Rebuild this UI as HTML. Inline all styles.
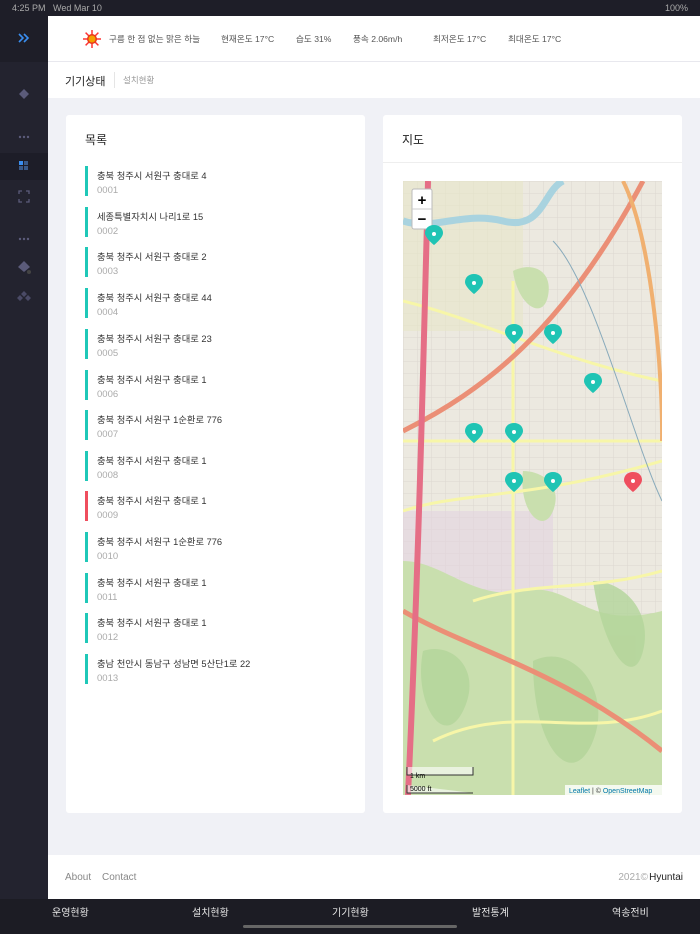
<!DOCTYPE html>
<html><head><meta charset="utf-8"><style>
*{margin:0;padding:0;box-sizing:border-box}
body{width:700px;height:934px;overflow:hidden;background:#f0f1f6;font-family:"Liberation Sans","Noto Sans CJK KR",sans-serif;position:relative}
.abs{position:absolute}
.sb{left:0;top:0;width:48px;height:934px;background:#23232f}
.status{left:0;top:0;width:700px;height:16px;background:#1e1e28;color:#aaa;font-size:9px;line-height:16px;padding-left:12px}
.hdr{left:48px;top:16px;width:652px;height:46px;background:#fff;border-bottom:1px solid #e8e8ee;font-size:8.6px;color:#555}
.hdr span{position:absolute;top:17px}
.tabs{left:48px;top:62px;width:652px;height:36px;background:#fff}
.card{background:#fff;border-radius:3px}
.it{position:absolute;left:85px;width:270px;height:30px}
.it i{position:absolute;left:0;top:0;width:3px;height:30px;background:#1fc8b8}
.it b{position:absolute;left:12px;top:2px;font-weight:normal;font-size:9.3px;color:#333}
.it s{position:absolute;left:12px;top:19px;text-decoration:none;font-size:9.5px;color:#aaa}
.foot{left:48px;top:855px;width:652px;height:44px;background:#fff;font-size:10px;color:#888}
.bt{left:0;top:899px;width:700px;height:35px;background:#1c1c24;color:#e6e6e6;font-size:10px}
.bt span{position:absolute;top:5px}
</style></head><body>
<div class="abs sb"></div>
<div class="abs status">4:25 PM &nbsp; Wed Mar 10<span style="position:absolute;right:12px">100%</span></div>
<div class="abs" style="left:0;top:16px;width:48px;height:46px;background:#1e1e28"></div>
<svg class="abs" style="left:0;top:0" width="48" height="934">
<path d="M19 34l4 4-4 4M24 34l4 4-4 4" stroke="#3a8ef0" stroke-width="1.6" fill="none"/>
<path d="M24 89l5 5-5 5-5-5z" fill="#5b5b7a"/>
<circle cx="20" cy="137" r="1.2" fill="#5b5b7a"/><circle cx="24" cy="137" r="1.2" fill="#5b5b7a"/><circle cx="28" cy="137" r="1.2" fill="#5b5b7a"/>
<rect x="0" y="153" width="48" height="27" fill="#1d1d28"/>
<rect x="19" y="161" width="4" height="4" fill="#3a8ef0"/><rect x="24" y="161" width="4" height="4" fill="#3a5a8a"/><rect x="19" y="166" width="4" height="4" fill="#3a5a8a"/><rect x="24" y="166" width="4" height="4" fill="#3a5a8a"/>
<path d="M19 194v-3h3M26 191h3v3M29 199v3h-3M22 202h-3v-3" stroke="#5b5b7a" fill="none" stroke-width="1.3"/>
<circle cx="20" cy="239" r="1.2" fill="#5b5b7a"/><circle cx="24" cy="239" r="1.2" fill="#5b5b7a"/><circle cx="28" cy="239" r="1.2" fill="#5b5b7a"/>
<path d="M24 261l6 6-6 5-6-5z" fill="#5b5b7a"/><circle cx="29" cy="272" r="2" fill="#444"/>
<path d="M24 291l3 3-3 3-3-3zM20 295l3 3-3 3-3-3zM28 295l3 3-3 3-3-3z" fill="#4a4a66"/>
</svg>
<div class="abs hdr">
<svg style="position:absolute;left:35px;top:14px" width="18" height="18"><g stroke="#f33" stroke-width="1.5"><path d="M9 0v18M0 9h18M2.6 2.6l12.8 12.8M15.4 2.6L2.6 15.4"/></g><circle cx="9" cy="9" r="5" fill="#e8381a"/><circle cx="9" cy="9" r="3.5" fill="#f5a000"/></svg>
<span style="left:61px">구름 한 점 없는 맑은 하늘</span><span style="left:173px">현재온도 17°C</span><span style="left:248px">습도 31%</span><span style="left:305px">풍속 2.06m/h</span><span style="left:385px">최저온도 17°C</span><span style="left:460px">최대온도 17°C</span>
</div>
<div class="abs tabs"><span style="position:absolute;left:17px;top:11px;font-size:11px;color:#222">기기상태</span><div style="position:absolute;left:66px;top:10px;width:1px;height:16px;background:#e5e5e5"></div><span style="position:absolute;left:75px;top:12px;font-size:8.5px;color:#999">설치현황</span></div>
<div class="abs card" style="left:66px;top:115px;width:299px;height:698px">
<div style="position:absolute;left:19px;top:16px;font-size:12px;color:#222">목록</div></div>
<div class="it" style="top:166px"><i></i><b>충북 청주시 서원구 충대로 4</b><s>0001</s></div>
<div class="it" style="top:207px"><i></i><b>세종특별자치시 나리1로 15</b><s>0002</s></div>
<div class="it" style="top:247px"><i></i><b>충북 청주시 서원구 충대로 2</b><s>0003</s></div>
<div class="it" style="top:288px"><i></i><b>충북 청주시 서원구 충대로 44</b><s>0004</s></div>
<div class="it" style="top:329px"><i></i><b>충북 청주시 서원구 충대로 23</b><s>0005</s></div>
<div class="it" style="top:370px"><i></i><b>충북 청주시 서원구 충대로 1</b><s>0006</s></div>
<div class="it" style="top:410px"><i></i><b>충북 청주시 서원구 1순환로 776</b><s>0007</s></div>
<div class="it" style="top:451px"><i></i><b>충북 청주시 서원구 충대로 1</b><s>0008</s></div>
<div class="it" style="top:491px"><i style="background:#ef4e5e"></i><b>충북 청주시 서원구 충대로 1</b><s>0009</s></div>
<div class="it" style="top:532px"><i></i><b>충북 청주시 서원구 1순환로 776</b><s>0010</s></div>
<div class="it" style="top:573px"><i></i><b>충북 청주시 서원구 충대로 1</b><s>0011</s></div>
<div class="it" style="top:613px"><i></i><b>충북 청주시 서원구 충대로 1</b><s>0012</s></div>
<div class="it" style="top:654px"><i></i><b>충남 천안시 동남구 성남면 5산단1로 22</b><s>0013</s></div>
<div class="abs card" style="left:383px;top:115px;width:299px;height:698px">
<div style="position:absolute;left:19px;top:16px;font-size:12px;color:#222">지도</div>
<div style="position:absolute;left:0;top:47px;width:299px;height:1px;background:#eee"></div></div>
<svg class="abs" style="left:403px;top:181px" width="259" height="614">
<defs><pattern id="g" width="14" height="12" patternUnits="userSpaceOnUse"><path d="M0 0h14M0 0v12" stroke="#d8d4cc" stroke-width="1" fill="none"/></pattern></defs>
<rect width="259" height="614" fill="#ece9e0"/>
<rect width="259" height="614" fill="url(#g)" opacity=".8"/>
<path d="M0 0h120v150H0z" fill="#e7e6c8" opacity=".6"/>
<path d="M0 330h150v90H0z" fill="#e3d3df" opacity=".6"/>
<g fill="#c9dfae"><path d="M0 380c40 0 70 40 120 30s60 40 139 20v184H0z"/><path d="M110 90c20-10 40 0 35 25s-30 10-35-25z"/><path d="M120 290c20 0 40 15 30 40s-35 0-30-40z"/></g>
<g fill="#b3d49a" opacity=".8"><path d="M20 470c30-10 60 20 40 60s-50-10-40-60z"/><path d="M130 480c40-20 80 30 60 80s-60 10-60-80z"/><path d="M190 400c30 0 60 30 50 70s-40 0-50-70z"/></g>
<path d="M0 40c30 10 60-10 100 0s40-30 60-40" stroke="#a9d3df" stroke-width="7" fill="none"/>
<g stroke="#f7f6a8" stroke-width="3" fill="none"><path d="M0 330c60-20 120-10 259-50"/><path d="M0 120c80 20 160 60 259 80"/><path d="M110 100v514"/><path d="M70 420c60-20 120-10 189-30"/><path d="M0 260h259"/><path d="M30 560c80-40 150 0 229-30"/></g>
<path d="M0 250c80-40 160-100 240-250" stroke="#eb8f76" stroke-width="5" fill="none"/>
<path d="M0 430c70 40 160 60 259 140" stroke="#eb8f76" stroke-width="5" fill="none"/>
<path d="M25 0c-5 200-10 400-20 614" stroke="#e56e86" stroke-width="6" fill="none"/>
<path d="M220 0c30 60 40 200 39 260" stroke="#f0b070" stroke-width="4" fill="none"/>
<path d="M150 60c40 40 80 200 109 260" stroke="#8ab" stroke-width="1" fill="none"/>
<rect x="9" y="8" width="20" height="40" rx="2" fill="#fff" stroke="#bbb"/><line x1="9" y1="28" x2="29" y2="28" stroke="#ccc"/>
<text x="19" y="24" font-size="15" text-anchor="middle" font-family="Liberation Sans" font-weight="bold">+</text>
<text x="19" y="43" font-size="15" text-anchor="middle" font-family="Liberation Sans" font-weight="bold">−</text>
<g fill="#1fc4b4">
<path d="M31 49c-6 0-9 4-9 8 0 5 9 12 9 12s9-7 9-12c0-4-3-8-9-8z" transform="translate(0,-5)"/>
<path d="M71 98c-6 0-9 4-9 8 0 5 9 12 9 12s9-7 9-12c0-4-3-8-9-8z" transform="translate(0,-5)"/>
<path d="M111 148c-6 0-9 4-9 8 0 5 9 12 9 12s9-7 9-12c0-4-3-8-9-8z" transform="translate(0,-5)"/>
<path d="M150 148c-6 0-9 4-9 8 0 5 9 12 9 12s9-7 9-12c0-4-3-8-9-8z" transform="translate(0,-5)"/>
<path d="M190 197c-6 0-9 4-9 8 0 5 9 12 9 12s9-7 9-12c0-4-3-8-9-8z" transform="translate(0,-5)"/>
<path d="M71 247c-6 0-9 4-9 8 0 5 9 12 9 12s9-7 9-12c0-4-3-8-9-8z" transform="translate(0,-5)"/>
<path d="M111 247c-6 0-9 4-9 8 0 5 9 12 9 12s9-7 9-12c0-4-3-8-9-8z" transform="translate(0,-5)"/>
<path d="M111 296c-6 0-9 4-9 8 0 5 9 12 9 12s9-7 9-12c0-4-3-8-9-8z" transform="translate(0,-5)"/>
<path d="M150 296c-6 0-9 4-9 8 0 5 9 12 9 12s9-7 9-12c0-4-3-8-9-8z" transform="translate(0,-5)"/>
<path fill="#ef4e5e" d="M230 296c-6 0-9 4-9 8 0 5 9 12 9 12s9-7 9-12c0-4-3-8-9-8z" transform="translate(0,-5)"/></g>
<g fill="#fff"><circle cx="31" cy="53" r="2"/><circle cx="71" cy="102" r="2"/><circle cx="111" cy="152" r="2"/><circle cx="150" cy="152" r="2"/><circle cx="190" cy="201" r="2"/><circle cx="71" cy="251" r="2"/><circle cx="111" cy="251" r="2"/><circle cx="111" cy="300" r="2"/><circle cx="150" cy="300" r="2"/><circle cx="230" cy="300" r="2"/></g>
<rect x="162" y="604" width="97" height="10" fill="#fff" opacity=".8"/>
<text x="166" y="612" font-size="7" fill="#0078a8" font-family="Liberation Sans">Leaflet <tspan fill="#333">| ©</tspan> OpenStreetMap</text>
<path d="M4 586v8h66v-8M4 604v8h66" stroke="#333" fill="#fff" fill-opacity=".6"/>
<text x="7" y="597" font-size="7" font-family="Liberation Sans">1 km</text><text x="7" y="610" font-size="7" font-family="Liberation Sans">5000 ft</text>
</svg>
<div class="abs foot"><span style="position:absolute;left:17px;top:17px">About</span><span style="position:absolute;left:54px;top:17px">Contact</span><span style="position:absolute;right:52px;top:17px;color:#aaa">2021©</span><span style="position:absolute;right:17px;top:17px;color:#222">Hyuntai</span></div>
<div class="abs bt"><span style="left:52px">운영현황</span><span style="left:192px">설치현황</span><span style="left:332px">기기현황</span><span style="left:472px">발전통계</span><span style="left:612px">역송전비</span><div style="position:absolute;left:243px;top:26px;width:214px;height:3px;border-radius:2px;background:#666"></div></div>
</body></html>
